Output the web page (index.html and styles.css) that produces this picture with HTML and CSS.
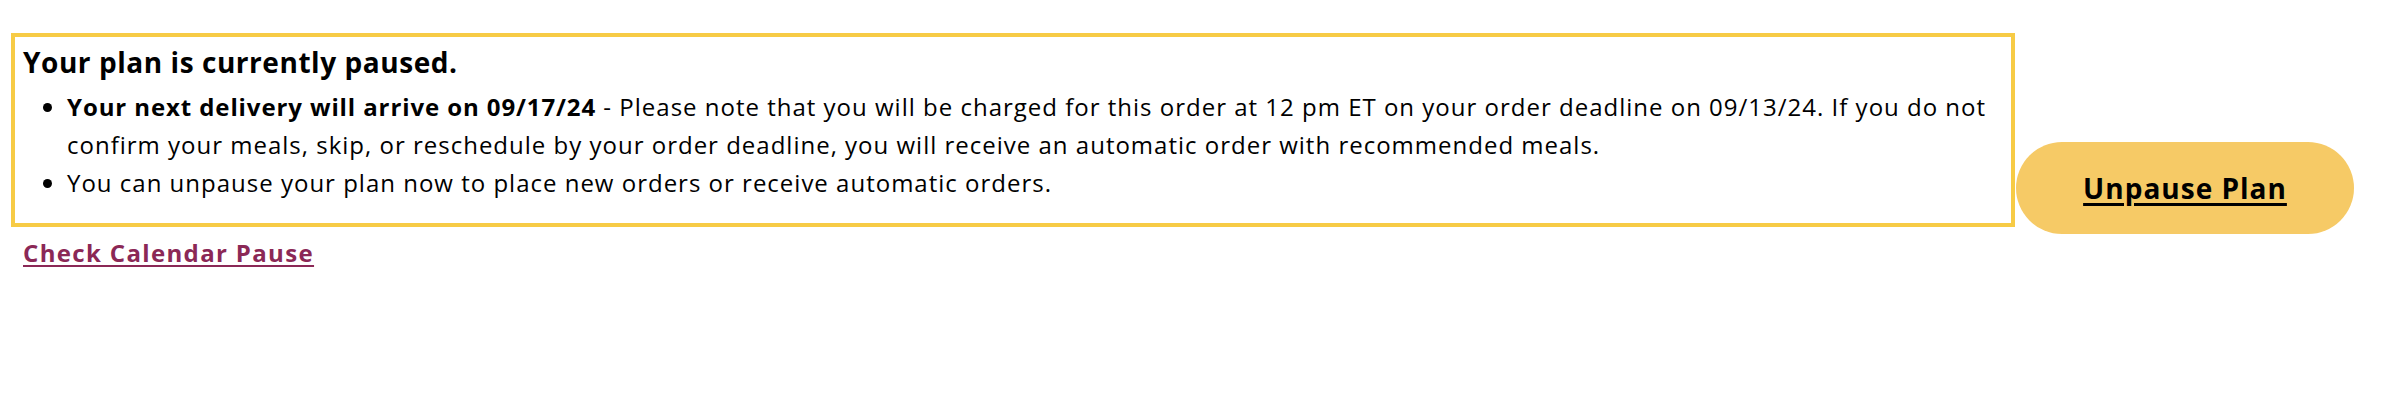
FILE: index.html
```html
<!DOCTYPE html>
<html lang="en">
<head>
<meta charset="utf-8">
<title>Plan paused</title>
<link rel="stylesheet" href="styles.css">
</head>
<body>
<div class="wrap">
  <div class="left">
    <div class="notice">
      <h2 class="notice-title">Your plan is currently paused.</h2>
      <ul class="notice-list">
        <li><strong>Your next delivery will arrive on 09/17/24</strong> - Please note that you will be charged for this order at 12 pm ET on your order deadline on 09/13/24. If you do not confirm your meals, skip, or reschedule by your order deadline, you will receive an automatic order with recommended meals.</li>
        <li>You can unpause your plan now to place new orders or receive automatic orders.</li>
      </ul>
    </div>
    <a class="calendar-link" href="#">Check Calendar Pause</a>
  </div>
  <button class="unpause-btn" type="button"><span>Unpause Plan</span></button>
</div>
</body>
</html>
```

FILE: styles.css
```css
html, body {
  margin: 0;
  padding: 0;
  background: #ffffff;
}

body {
  font-family: "Open Sans", "Noto Sans", sans-serif;
  color: #000000;
}

.wrap {
  display: flex;
  align-items: flex-start;
  padding: 33px 36px 0 11px;
}

.left {
  flex: none;
  width: 2004px;
  display: flex;
  flex-direction: column;
  align-items: flex-start;
}

.notice {
  align-self: stretch;
  border: 4px solid #f7cb45;
  padding: 7px 4px 21px 8px;
}

.notice-title {
  margin: 0 0 8px;
  font-size: 28px;
  font-weight: 700;
  line-height: 36px;
  letter-spacing: 0.55px;
}

.notice-list {
  margin: 0;
  padding-left: 44px;
  font-size: 24px;
  line-height: 38px;
  letter-spacing: 1px;
}

.notice-list strong {
  font-weight: 700;
  letter-spacing: 0.9px;
}

.calendar-link {
  margin-top: 9px;
  margin-left: 12px;
  font-size: 24px;
  font-weight: 700;
  line-height: 34px;
  letter-spacing: 1.35px;
  color: #8b2856;
  text-decoration: underline;
  text-underline-offset: 3px;
}

.unpause-btn {
  flex: none;
  margin-top: 109px;
  margin-left: 1px;
  width: 338px;
  height: 92px;
  border: none;
  border-radius: 46px;
  background: #f6ca66;
  font-family: "Open Sans", "Noto Sans", sans-serif;
  font-size: 28px;
  font-weight: 700;
  letter-spacing: 1px;
  color: #000000;
  cursor: pointer;
}

.unpause-btn span {
  text-decoration: underline;
  text-underline-offset: 4px;
  text-decoration-thickness: 3px;
}
```
